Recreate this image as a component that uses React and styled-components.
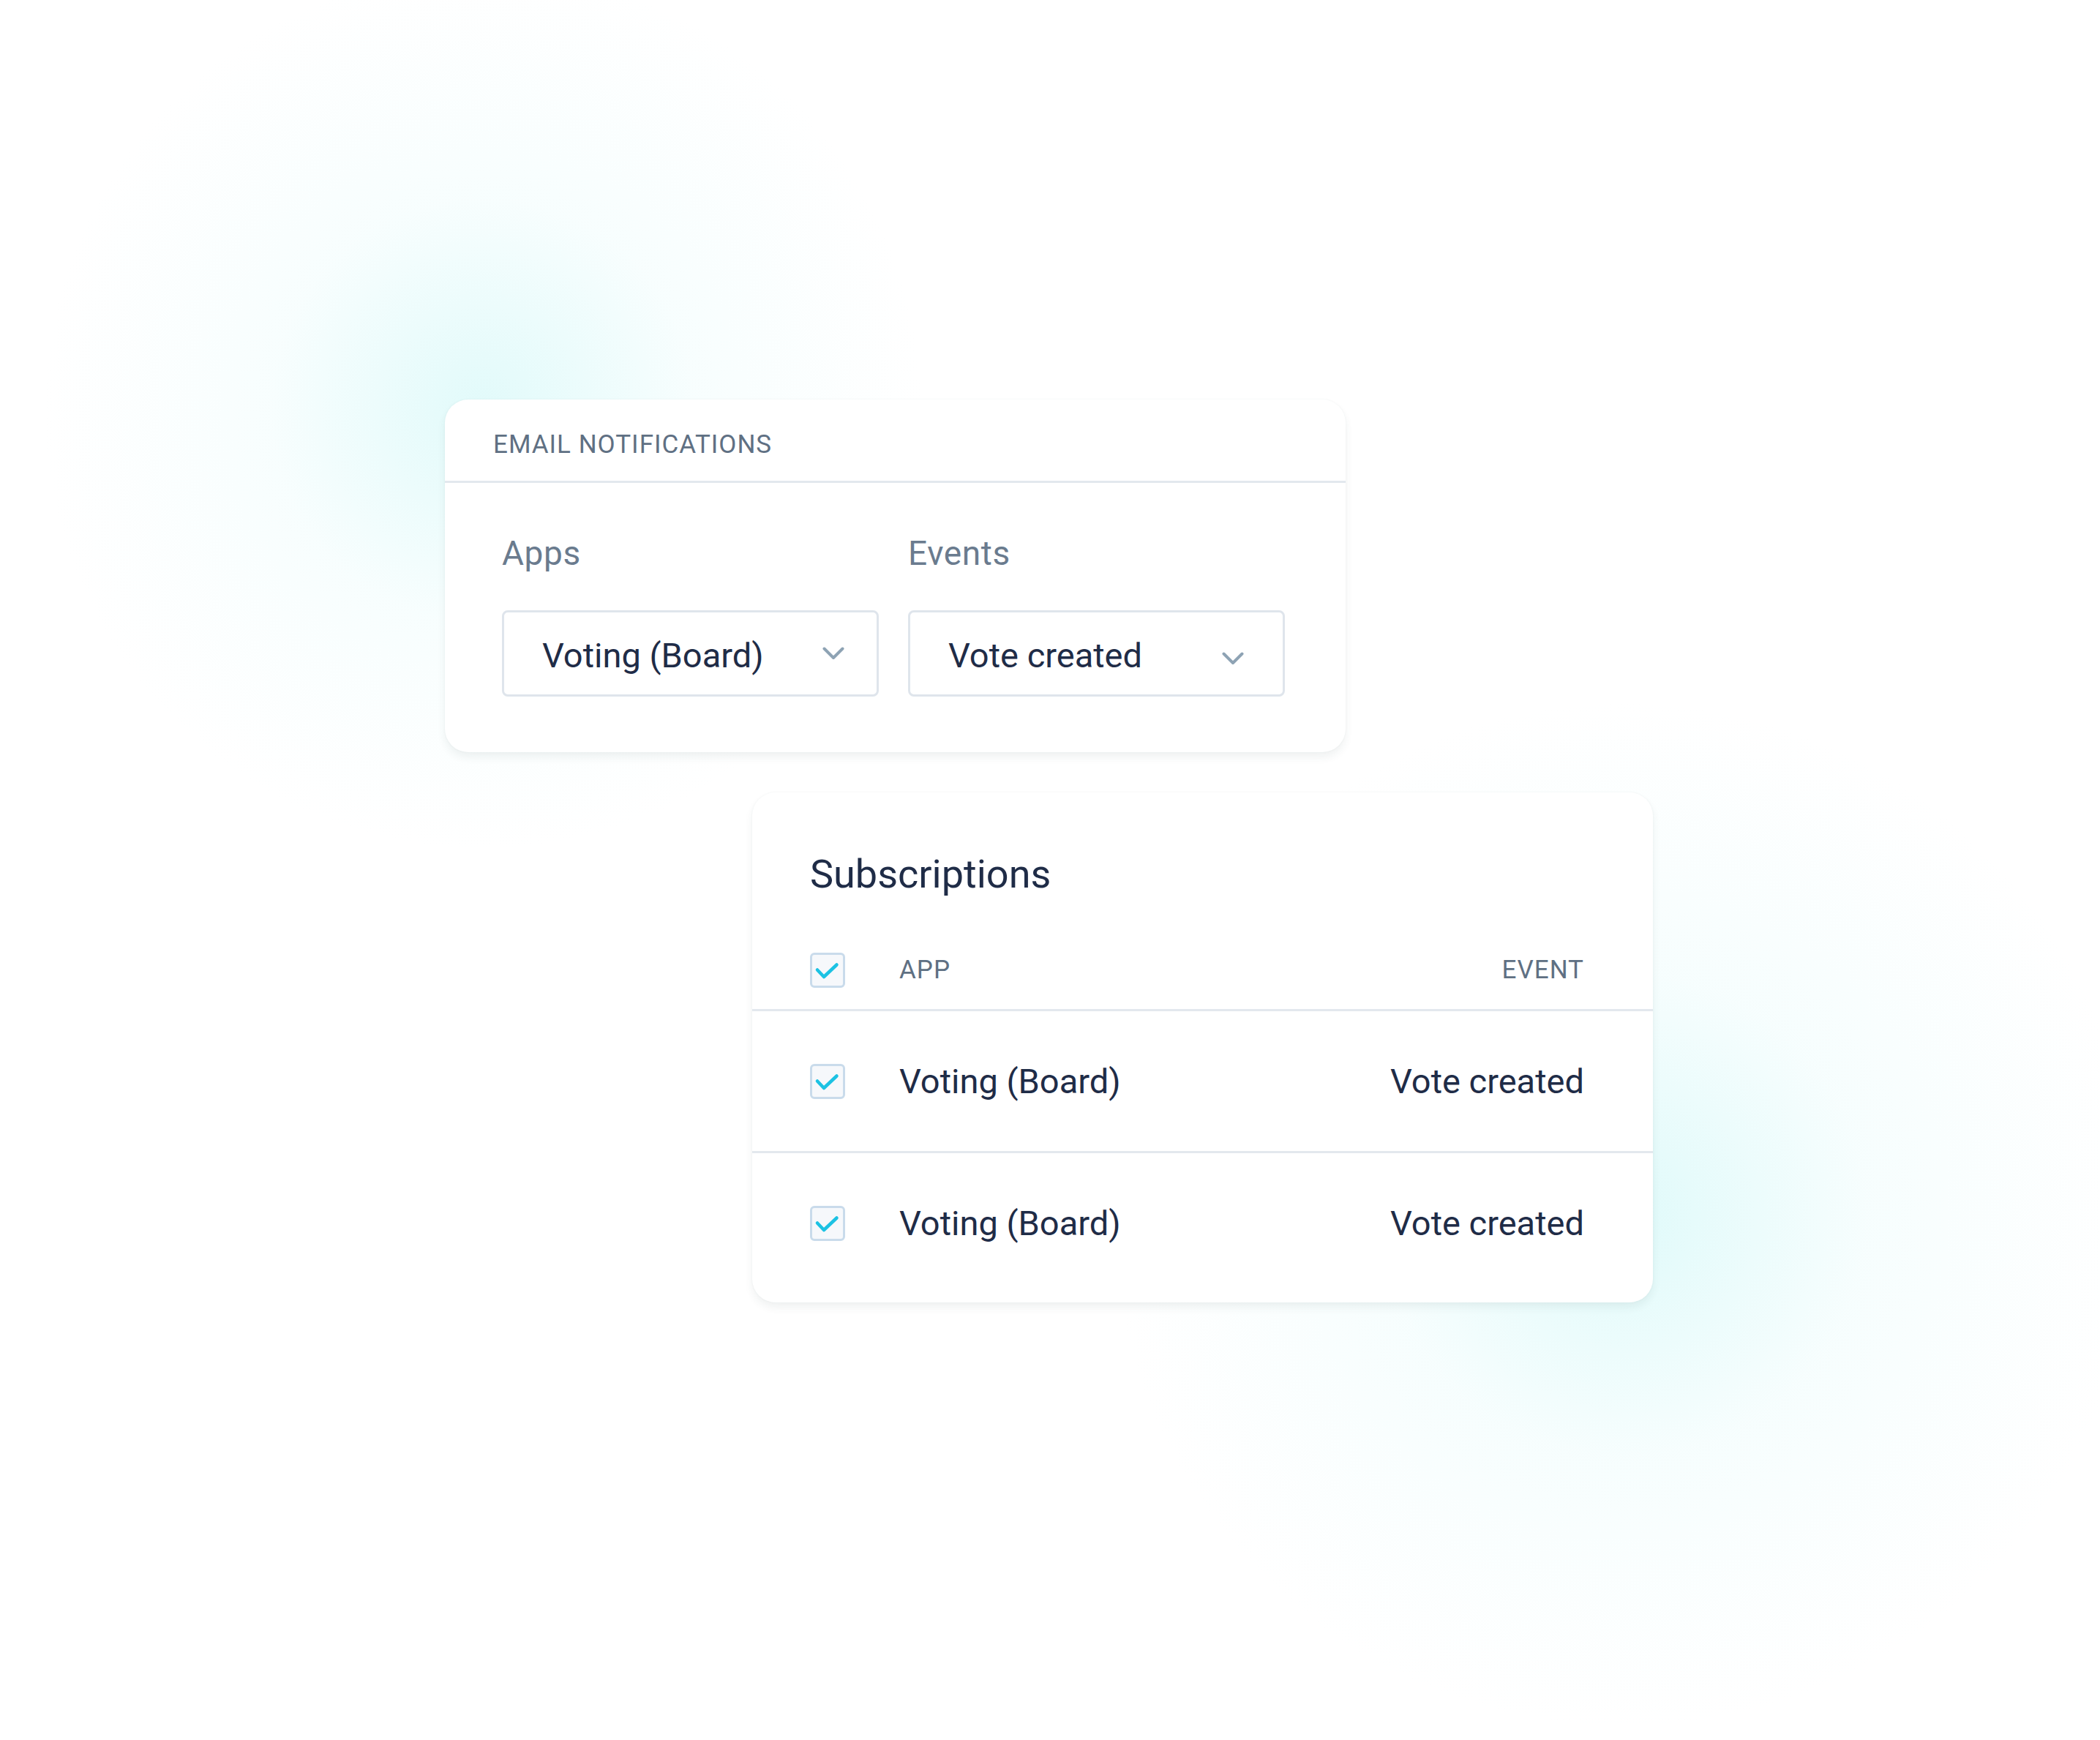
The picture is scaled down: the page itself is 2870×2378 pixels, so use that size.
import React from "react";
import styled, { createGlobalStyle } from "styled-components";

const GlobalStyle = createGlobalStyle`
  html, body {
    margin: 0;
    padding: 0;
    background: #ffffff;
  }
  body {
    font-family: Roboto, "Liberation Sans", sans-serif;
    -webkit-font-smoothing: antialiased;
  }
`;

const Page = styled.div`
  width: 2870px;
  min-height: 2378px;
  box-sizing: border-box;
  padding: 546px 0 0 608px;
  display: flex;
  flex-direction: column;
  align-items: flex-start;
  background:
    radial-gradient(circle at 660px 560px, rgba(218, 249, 249, 0.8) 0, rgba(236, 252, 252, 0.4) 290px, rgba(255, 255, 255, 0) 600px),
    radial-gradient(circle at 2220px 1660px, rgba(218, 249, 249, 0.85) 0, rgba(236, 252, 252, 0.45) 330px, rgba(255, 255, 255, 0) 700px),
    #ffffff;
`;

const Card = styled.section`
  width: 1231px;
  box-sizing: border-box;
  background: #ffffff;
  border-radius: 32px;
  box-shadow: 0 7px 12px rgba(40, 70, 70, 0.07), 0 0 3px rgba(40, 70, 70, 0.05);
  overflow: hidden;
  margin-left: ${p => p.$indent || 0}px;
  margin-top: ${p => p.$gap || 0}px;
  padding-bottom: ${p => p.$bottom || 0}px;
`;

const CardHeader = styled.header`
  height: 114px;
  box-sizing: border-box;
  padding: 12px 66px 0;
  display: flex;
  align-items: center;
  border-bottom: 3px solid #e3e8ee;
`;

const Overline = styled.span`
  font-size: 35px;
  letter-spacing: 1px;
  line-height: 1;
  color: #5f7083;
  text-transform: uppercase;
`;

const FieldGrid = styled.div`
  display: grid;
  grid-template-columns: 515px 515px;
  column-gap: 40px;
  row-gap: 55px;
  padding: 73px 0 76px 78px;
`;

const FieldLabel = styled.div`
  font-size: 46px;
  letter-spacing: 0.6px;
  line-height: 1;
  color: #6a7b8e;
`;

const SelectBox = styled.div`
  height: 118px;
  box-sizing: border-box;
  border: 3px solid #dfe5ec;
  border-radius: 8px;
  display: flex;
  align-items: center;
  justify-content: space-between;
  padding: 4px ${p => p.$right}px 0 52px;
  font-size: 47px;
  line-height: 1;
  color: #1f2c47;
`;

const Chevron = styled.svg`
  width: 30px;
  height: 19px;
  margin-top: ${p => p.$drop}px;
  flex-shrink: 0;
`;

const Title = styled.h2`
  margin: 0;
  padding: 85px 0 0 79px;
  font-size: 54px;
  font-weight: 400;
  line-height: 1;
  color: #1f2c47;
`;

const Row = styled.div`
  height: ${p => (p.$head ? 110 : 194)}px;
  box-sizing: border-box;
  display: flex;
  align-items: center;
  padding: 0 94px 0 79px;
  margin-top: ${p => (p.$head ? 50 : 0)}px;
  border-bottom: 3px solid ${p => (p.$last ? "transparent" : "#e3e8ee")};
  font-size: ${p => (p.$head ? 35 : 47)}px;
  letter-spacing: ${p => (p.$head ? 1 : 0)}px;
  line-height: 1;
  color: ${p => (p.$head ? "#5f7083" : "#1f2c47")};
  text-transform: ${p => (p.$head ? "uppercase" : "none")};
`;

const Box = styled.span`
  width: 48px;
  height: 48px;
  box-sizing: border-box;
  border: 3px solid #c9dbeb;
  border-radius: 6px;
  background: #f6f8fb;
  display: flex;
  align-items: center;
  justify-content: center;
  flex-shrink: 0;
  margin-right: 74px;
`;

const AppCell = styled.span`
  flex: 1;
`;

const EventCell = styled.span`
  text-align: right;
`;

const ChevronIcon = ({ drop }) => (
  <Chevron $drop={drop} viewBox="0 0 30 19" fill="none">
    <path d="M2.5 2.5 L15 15 L27.5 2.5" stroke="#8ea3b4" strokeWidth="4" strokeLinecap="round" strokeLinejoin="round" />
  </Chevron>
);

const Checkbox = () => (
  <Box>
    <svg width="42" height="42" viewBox="0 0 42 42" fill="none">
      <path d="M7 20.5 L16 30 L33.5 13.5" stroke="#1cc2e3" strokeWidth="4.5" strokeLinecap="round" strokeLinejoin="round" />
    </svg>
  </Box>
);

const subscriptions = [
  { app: "Voting (Board)", event: "Vote created" },
  { app: "Voting (Board)", event: "Vote created" }
];

const App = () => (
  <Page>
    <GlobalStyle />
    <Card>
      <CardHeader>
        <Overline>Email notifications</Overline>
      </CardHeader>
      <FieldGrid>
        <FieldLabel>Apps</FieldLabel>
        <FieldLabel>Events</FieldLabel>
        <SelectBox $right={44}>
          Voting (Board)
          <ChevronIcon drop={-3} />
        </SelectBox>
        <SelectBox $right={53}>
          Vote created
          <ChevronIcon drop={10} />
        </SelectBox>
      </FieldGrid>
    </Card>

    <Card $indent={420} $gap={55} $bottom={10}>
      <Title>Subscriptions</Title>
      <Row $head>
        <Checkbox />
        <AppCell>App</AppCell>
        <EventCell>Event</EventCell>
      </Row>
      {subscriptions.map((s, i) => (
        <Row key={i} $last={i === subscriptions.length - 1}>
          <Checkbox />
          <AppCell>{s.app}</AppCell>
          <EventCell>{s.event}</EventCell>
        </Row>
      ))}
    </Card>
  </Page>
);

export default App;
